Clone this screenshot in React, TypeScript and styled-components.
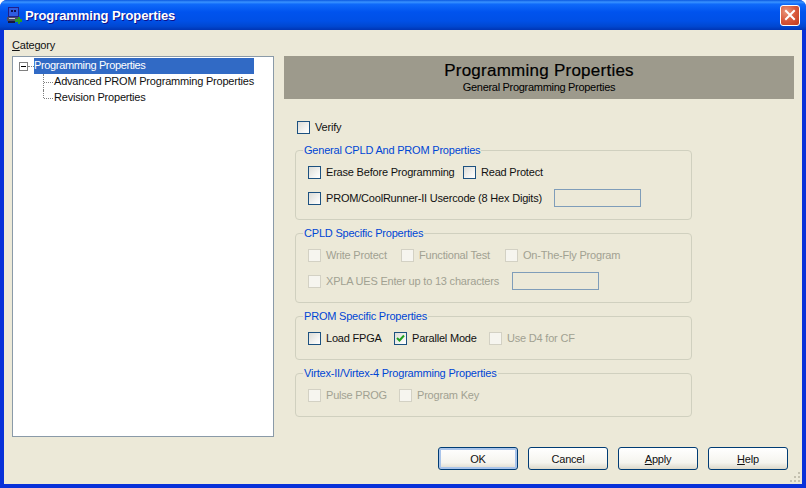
import React from 'react';
import styled, { createGlobalStyle } from 'styled-components';

const GlobalStyle = createGlobalStyle`
  html, body {
    margin: 0;
    padding: 0;
    background: #fff;
  }
  * {
    box-sizing: border-box;
  }
`;

const Window = styled.div`
  width: 806px;
  height: 488px;
  display: flex;
  flex-direction: column;
  background: #0831d9;
  border-radius: 7px 7px 0 0;
  overflow: hidden;
  font-family: 'Liberation Sans', Arial, sans-serif;
  font-size: 11px;
  letter-spacing: -0.2px;
  color: #111;
`;

const TitleBar = styled.div`
  height: 30px;
  flex: none;
  display: flex;
  align-items: center;
  padding: 0 7px;
  background: linear-gradient(
    180deg,
    #0a58e0 0%,
    #3a93ff 7%,
    #0f6afa 14%,
    #0053ee 40%,
    #0050e6 70%,
    #0047d0 88%,
    #0035b4 100%
  );
`;

const AppIcon = styled.svg`
  width: 15px;
  height: 17px;
  flex: none;
`;

const Title = styled.div`
  flex: 1;
  margin-left: 3px;
  color: #fff;
  font-size: 13px;
  font-weight: 700;
  letter-spacing: -0.1px;
  text-shadow: 1px 1px 0 #0f1089;
`;

const CloseButton = styled.div`
  width: 20px;
  height: 21px;
  margin-right: -1px;
  display: flex;
  align-items: center;
  justify-content: center;
  border: 1px solid #fff;
  border-radius: 3px;
  background: radial-gradient(circle at 30% 30%, #e9967c 0%, #d8583a 50%, #c23a1c 100%);
`;

const Client = styled.div`
  position: relative;
  flex: 1;
  margin: 0 4px 4px;
  display: grid;
  grid-template-columns: 262px 510px;
  grid-template-rows: 26px 381px 1fr;
  column-gap: 10px;
  padding-left: 8px;
  background: #ece9d8;
`;

const CategoryLabel = styled.div`
  grid-column: 1 / span 2;
  padding-top: 8px;
  line-height: 14px;
`;

const Key = styled.span`
  text-decoration: underline;
`;

const TreePanel = styled.div`
  padding: 1px 0 0 6px;
  background: #fff;
  border: 1px solid #8a9aa8;
`;

const TreeRootRow = styled.div`
  display: flex;
  align-items: center;
  height: 16px;
`;

const Expander = styled.div`
  position: relative;
  width: 9px;
  height: 9px;
  flex: none;
  border: 1px solid #808080;
  background: #fff;
  &::before {
    content: '';
    position: absolute;
    left: 1px;
    right: 1px;
    top: 3px;
    height: 1px;
    background: #000;
  }
`;

const TreeDots = styled.div`
  width: 6px;
  flex: none;
  border-top: 1px dotted #808080;
`;

const TreeSelected = styled.div`
  width: 220px;
  height: 16px;
  line-height: 15px;
  letter-spacing: -0.35px;
  color: #fff;
  background: #316ac5;
`;

const TreeChild = styled.div<{ $last?: boolean }>`
  position: relative;
  height: 16px;
  padding-left: 35px;
  line-height: 14px;
  white-space: nowrap;
  &::before {
    content: '';
    position: absolute;
    left: 24px;
    top: 0;
    height: ${(p) => (p.$last ? '8px' : '16px')};
    border-left: 1px dotted #808080;
  }
  &::after {
    content: '';
    position: absolute;
    left: 25px;
    top: 8px;
    width: 9px;
    border-top: 1px dotted #808080;
  }
`;

const RightPanel = styled.div`
  display: flex;
  flex-direction: column;
`;

const Banner = styled.div`
  height: 43px;
  flex: none;
  display: flex;
  flex-direction: column;
  align-items: center;
  padding-top: 5px;
  background: #9d9a8c;
  color: #000;
`;

const BannerTitle = styled.div`
  font-size: 17px;
  line-height: 19px;
  letter-spacing: 0.25px;
  -webkit-text-stroke: 0.2px #000;
`;

const BannerSubtitle = styled.div`
  font-size: 11px;
  line-height: 14px;
  letter-spacing: -0.3px;
`;

const Settings = styled.div`
  padding-left: 11px;
  display: flex;
  flex-direction: column;
  gap: 6px;
`;

const VerifyRow = styled.div`
  display: flex;
  align-items: center;
  height: 18px;
  margin: 19px 0 1px 2px;
`;

const Group = styled.fieldset`
  width: 397px;
  min-width: 0;
  margin: 0;
  padding: 5px 12px 11px;
  border: 1px solid #d0d0bf;
  border-radius: 4px;
  display: flex;
  flex-direction: column;
  gap: 6px;
`;

const GroupTitle = styled.legend`
  height: 14px;
  margin-left: -5px;
  padding: 0 1px;
  line-height: 14px;
  color: #0046d5;
`;

const Row = styled.div`
  display: flex;
  align-items: center;
  height: 20px;
`;

const Option = styled.div<{ $width?: number }>`
  display: flex;
  align-items: center;
  flex: none;
  width: ${(p) => (p.$width ? `${p.$width}px` : 'auto')};
  white-space: nowrap;
`;

const Box = styled.span<{ $disabled?: boolean }>`
  width: 13px;
  height: 13px;
  flex: none;
  margin-right: 5px;
  display: flex;
  align-items: center;
  justify-content: center;
  border: 1px solid ${(p) => (p.$disabled ? '#d3d1c4' : '#1c5180')};
  background: ${(p) =>
    p.$disabled ? '#f6f5ef' : 'linear-gradient(135deg, #dcdcd7 0%, #f6f6f4 70%, #fff 100%)'};
`;

const OptionLabel = styled.span<{ $disabled?: boolean }>`
  color: ${(p) => (p.$disabled ? '#a1a192' : '#111')};
`;

const TextField = styled.div`
  width: 87px;
  height: 18px;
  flex: none;
  border: 1px solid #7f9db9;
  background: #ece9d8;
`;

const Footer = styled.div`
  grid-column: 1 / span 2;
  display: flex;
  justify-content: flex-end;
  gap: 10px;
  padding: 10px 6px 0 0;
`;

const Button = styled.div<{ $default?: boolean }>`
  width: 80px;
  height: 23px;
  display: flex;
  align-items: center;
  justify-content: center;
  border: 1px solid #003c74;
  border-radius: 3px;
  background: linear-gradient(180deg, #fff 0%, #f5f4ee 70%, #dcd8ca 100%);
  box-shadow: ${(p) => (p.$default ? 'inset 0 0 0 2px #a9c4ea' : 'none')};
`;

const Grip = styled.svg`
  position: absolute;
  right: 1px;
  bottom: 1px;
  width: 11px;
  height: 11px;
`;

const Check = () => (
  <svg width="9" height="9" viewBox="0 0 9 9">
    <path d="M1 4 L3.5 6.5 L8 1.5" fill="none" stroke="#21a121" strokeWidth="2" />
  </svg>
);

type CheckOptionProps = {
  label: string;
  width?: number;
  checked?: boolean;
  disabled?: boolean;
};

const CheckOption = ({ label, width, checked, disabled }: CheckOptionProps) => (
  <Option $width={width}>
    <Box $disabled={disabled}>{checked && <Check />}</Box>
    <OptionLabel $disabled={disabled}>{label}</OptionLabel>
  </Option>
);

export default function App() {
  return (
    <Window>
      <GlobalStyle />
      <TitleBar>
        <AppIcon viewBox="0 0 15 17">
          <rect x="1" y="0" width="11" height="10" fill="#20208a" />
          <rect x="2" y="1" width="9" height="8" fill="#2f5ce0" />
          <rect x="4" y="3" width="2" height="2" fill="#101050" />
          <rect x="7" y="3" width="2" height="2" fill="#101050" />
          <rect x="0" y="10" width="11" height="4" fill="#4a4a6a" />
          <rect x="2" y="11" width="6" height="1" fill="#c8c8d0" />
          <rect x="1" y="14" width="7" height="2" fill="#16163e" />
          <path d="M8 12 h3 v-2 h2 v2 h2 v3 h-2 v2 h-2 v-2 h-3 z" fill="#2a9a2a" />
        </AppIcon>
        <Title>Programming Properties</Title>
        <CloseButton>
          <svg width="12" height="12" viewBox="0 0 12 12">
            <path d="M2 2 L10 10 M10 2 L2 10" stroke="#fff" strokeWidth="2" strokeLinecap="square" />
          </svg>
        </CloseButton>
      </TitleBar>
      <Client>
        <CategoryLabel>
          <Key>C</Key>ategory
        </CategoryLabel>
        <TreePanel>
          <TreeRootRow>
            <Expander />
            <TreeDots />
            <TreeSelected>Programming Properties</TreeSelected>
          </TreeRootRow>
          <TreeChild>Advanced PROM Programming Properties</TreeChild>
          <TreeChild $last>Revision Properties</TreeChild>
        </TreePanel>
        <RightPanel>
          <Banner>
            <BannerTitle>Programming Properties</BannerTitle>
            <BannerSubtitle>General Programming Properties</BannerSubtitle>
          </Banner>
          <Settings>
            <VerifyRow>
              <CheckOption label="Verify" />
            </VerifyRow>
            <Group>
              <GroupTitle>General CPLD And PROM Properties</GroupTitle>
              <Row>
                <CheckOption label="Erase Before Programming" width={155} />
                <CheckOption label="Read Protect" />
              </Row>
              <Row>
                <CheckOption label="PROM/CoolRunner-II Usercode (8 Hex Digits)" width={246} />
                <TextField />
              </Row>
            </Group>
            <Group>
              <GroupTitle>CPLD Specific Properties</GroupTitle>
              <Row>
                <CheckOption label="Write Protect" width={93} disabled />
                <CheckOption label="Functional Test" width={104} disabled />
                <CheckOption label="On-The-Fly Program" disabled />
              </Row>
              <Row>
                <CheckOption label="XPLA UES Enter up to 13 characters" width={204} disabled />
                <TextField />
              </Row>
            </Group>
            <Group>
              <GroupTitle>PROM Specific Properties</GroupTitle>
              <Row>
                <CheckOption label="Load FPGA" width={86} />
                <CheckOption label="Parallel Mode" width={95} checked />
                <CheckOption label="Use D4 for CF" disabled />
              </Row>
            </Group>
            <Group>
              <GroupTitle>Virtex-II/Virtex-4 Programming Properties</GroupTitle>
              <Row>
                <CheckOption label="Pulse PROG" width={91} disabled />
                <CheckOption label="Program Key" disabled />
              </Row>
            </Group>
          </Settings>
        </RightPanel>
        <Footer>
          <Button $default>OK</Button>
          <Button>Cancel</Button>
          <Button>
            <span>
              <Key>A</Key>pply
            </span>
          </Button>
          <Button>
            <span>
              <Key>H</Key>elp
            </span>
          </Button>
        </Footer>
        <Grip viewBox="0 0 11 11">
          <path d="M8 0h2v2H8zM4 4h2v2H4zM8 4h2v2H8zM0 8h2v2H0zM4 8h2v2H4zM8 8h2v2H8z" fill="#c4c1b0" />
        </Grip>
      </Client>
    </Window>
  );
}
